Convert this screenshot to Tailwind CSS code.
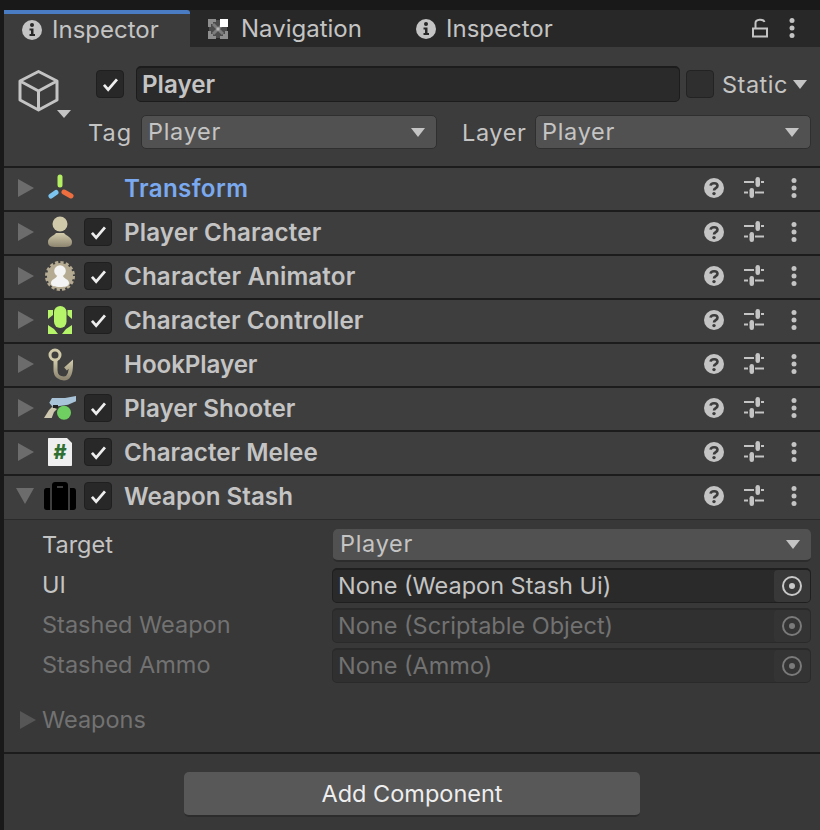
<!DOCTYPE html>
<html lang="en">
<head>
    <meta charset="UTF-8">
    <meta name="viewport" content="width=device-width, initial-scale=1.0">
    <title>Inspector</title>
    <script src="https://cdn.jsdelivr.net/npm/@tailwindcss/browser@4"></script>
</head>
<body class="bg-[#191919] font-['Inter',sans-serif] text-[#c4c4c4] text-[23.5px] leading-none">
    <!-- shared icons -->
    <svg width="0" height="0" class="absolute">
        <defs>
            <linearGradient id="tan" x1="0" y1="0" x2="0" y2="1">
                <stop offset="0" stop-color="#d2cbab"/>
                <stop offset="1" stop-color="#8d8570"/>
            </linearGradient>
        </defs>
        <symbol id="check" viewBox="0 0 28 28">
            <polyline points="7.5,15 12,20 21.5,9" fill="none" stroke="#eeeeee" stroke-width="3"/>
        </symbol>
        <symbol id="info" viewBox="0 0 20 20">
            <circle cx="10" cy="10" r="10" fill="#c4c4c4"/>
            <circle cx="10" cy="5" r="2" fill="#282828"/>
            <path d="M7.5 8.5H11.5V14H13V16H7.5V14H9V10.5H7.5Z" fill="#282828"/>
        </symbol>
        <symbol id="help" viewBox="0 0 20 20">
            <circle cx="10" cy="10" r="10" fill="#c4c4c4"/>
            <path d="M6.6 7.6C6.9 4.6 13.4 4.2 13.5 7.8C13.5 10.4 10 10 10 12.6" fill="none" stroke="#3c3c3c" stroke-width="2.6"/>
            <circle cx="10" cy="15.6" r="1.7" fill="#3c3c3c"/>
        </symbol>
        <symbol id="sliders" viewBox="0 0 20 22">
            <path d="M0 5H10M17 5H20M0 15.5H4M11 15.5H20" stroke="#c4c4c4" stroke-width="2"/>
            <rect x="11.5" y="0" width="4.5" height="10" rx="2.2" fill="#c4c4c4"/>
            <rect x="5.5" y="11" width="4.5" height="10" rx="2.2" fill="#c4c4c4"/>
        </symbol>
        <symbol id="dots" viewBox="0 0 6 22">
            <circle cx="3" cy="3.4" r="2.5" fill="#c4c4c4"/>
            <circle cx="3" cy="11" r="2.5" fill="#c4c4c4"/>
            <circle cx="3" cy="18.6" r="2.5" fill="#c4c4c4"/>
        </symbol>
        <symbol id="right" viewBox="0 0 16 18">
            <polygon points="0,0 16,9 0,18" fill="#6c6c6c"/>
        </symbol>
        <symbol id="target" viewBox="0 0 20 20">
            <circle cx="10" cy="10" r="9" fill="none" stroke="currentColor" stroke-width="2"/>
            <circle cx="10" cy="10" r="3" fill="currentColor"/>
        </symbol>
    </svg>

    <div class="w-[820px] h-[830px] overflow-hidden pt-[10px] pl-[4px] flex flex-col">
        <!-- tabs -->
        <div class="h-[37px] shrink-0 bg-[#282828] flex items-stretch text-[24px]">
            <div class="w-[186px] bg-[#3c3c3c] border-t-4 border-[#4a7cc4] rounded-tr-[3px] flex items-center pl-[18px] pb-[1px] gap-[10px]">
                <svg class="w-[20px] h-[20px]"><use href="#info"/></svg>
                <span>Inspector</span>
            </div>
            <div class="flex items-center pl-[18px] gap-[13px] w-[208px]">
                <svg class="w-[20px] h-[20px]" viewBox="0 0 20 20">
                    <rect x="1" y="1" width="18" height="18" fill="#4c4c4c"/>
                    <path d="M0 0H8V3H5V5H3V8H0ZM0 12H3V15H5V17H8V20H0ZM12 17H15V15H17V12H20V20H12Z" fill="#8e8e8e"/>
                    <path d="M5 5L15 15M15 5L5 15" stroke="#7c7c7c" stroke-width="3"/>
                    <rect x="8.500" y="8.500" width="3" height="3" fill="#b8b8b8"/>
                    <rect x="12" y="0" width="8" height="8" fill="#ffffff"/>
                </svg>
                <span>Navigation</span>
            </div>
            <div class="flex items-center pl-[18px] gap-[10px]">
                <svg class="w-[20px] h-[20px]"><use href="#info"/></svg>
                <span>Inspector</span>
            </div>
            <div class="ml-auto flex items-center pr-[25px] pb-[1px] gap-[21px]">
                <svg class="w-[16px] h-[20px]" viewBox="0 0 16 20">
                    <path d="M1 10.5H15V18.5H1ZM3.5 10V5C3.5 0.8 11.5 0.8 12.5 4" fill="none" stroke="#c4c4c4" stroke-width="2"/>
                </svg>
                <svg class="w-[6px] h-[22px]"><use href="#dots"/></svg>
            </div>
        </div>

        <!-- game object header -->
        <div class="h-[121px] shrink-0 bg-[#3c3c3c] border-b-2 border-[#1c1c1c] flex">
            <div class="w-[84px] pl-[14px] pt-[23px]">
                <svg class="w-[54px] h-[50px]" viewBox="0 0 54 50">
                    <path d="M20.5 1.5L39 11V30L20.5 40L2 30V11ZM2 11L20.5 21L39 11M20.5 21V40" fill="none" stroke="#c4c4c4" stroke-width="3" stroke-linejoin="round"/>
                    <polygon points="39,40 53,40 46,48" fill="#c4c4c4"/>
                </svg>
            </div>
            <div class="flex-1">
                <div class="h-[36px] mt-[19px] pl-[8px] flex items-center">
                    <div class="w-[28px] h-[28px] bg-[#282828] border border-[#1f1f1f] rounded-[4px]">
                        <svg class="w-full h-full"><use href="#check"/></svg>
                    </div>
                    <div class="w-[544px] h-[36px] ml-[12px] bg-[#2a2a2a] border border-[#1c1c1c] border-t-2 rounded-[5px] flex items-center pl-[5px] font-semibold text-[24.2px]"><span class="mt-[2px]">Player</span></div>
                    <div class="w-[28px] h-[28px] ml-[6px] bg-[#2f2f2f] border border-[#232323] rounded-[4px]"></div>
                    <span class="ml-[8px] mt-[2px] tracking-[0.5px]">Static</span>
                    <svg class="w-[14px] h-[9px] ml-[5px]" viewBox="0 0 14 9"><polygon points="0,0 14,0 7,9" fill="#c4c4c4"/></svg>
                </div>
                <div class="h-[34px] mt-[13px] flex items-center">
                    <span class="w-[53px] mt-[2px] tracking-[1px]">Tag</span>
                    <div class="w-[296px] h-[34px] bg-[#515151] border border-[#2f2f2f] rounded-[5px] flex items-center justify-between pl-[6px] pr-[11px]">
                        <span class="tracking-[0.7px]">Player</span>
                        <svg class="w-[14px] h-[9px]" viewBox="0 0 14 9"><polygon points="0,0 14,0 7,9" fill="#c4c4c4"/></svg>
                    </div>
                    <span class="w-[73px] ml-[25px] mt-[2px] tracking-[0.6px]">Layer</span>
                    <div class="w-[276px] h-[34px] bg-[#515151] border border-[#2f2f2f] rounded-[5px] flex items-center justify-between pl-[6px] pr-[11px]">
                        <span class="tracking-[0.7px]">Player</span>
                        <svg class="w-[14px] h-[9px]" viewBox="0 0 14 9"><polygon points="0,0 14,0 7,9" fill="#c4c4c4"/></svg>
                    </div>
                </div>
            </div>
        </div>

        <!-- components -->
        <div class="h-[44px] shrink-0 bg-[#3e3e3e] border-b-2 border-[#1c1c1c] pb-[2px] pl-[14px] flex items-center">
            <svg class="w-[16px] h-[18px]"><use href="#right"/></svg>
            <svg class="w-[40px] h-[40px] ml-[6px]" viewBox="0 0 40 40">
                <path d="M20 9V17" stroke="#b4ee62" stroke-width="5" stroke-linecap="round"/>
                <path d="M11 28L16 24.5" stroke="#7cc4f0" stroke-width="5" stroke-linecap="round"/>
                <path d="M24 24L31 28" stroke="#ee6e40" stroke-width="5" stroke-linecap="round"/>
            </svg>
            <span class="ml-[44px] mt-[2px] font-semibold text-[24.2px] tracking-[0.35px] text-[#7ba9ef]">Transform</span>
            <svg class="w-[20px] h-[20px] ml-auto"><use href="#help"/></svg>
            <svg class="w-[20px] h-[22px] ml-[20px]"><use href="#sliders"/></svg>
            <svg class="w-[6px] h-[22px] ml-[27px] mr-[23px]"><use href="#dots"/></svg>
        </div>

        <div class="h-[44px] shrink-0 bg-[#3e3e3e] border-b-2 border-[#1c1c1c] pb-[2px] pl-[14px] flex items-center">
            <svg class="w-[16px] h-[18px]"><use href="#right"/></svg>
            <svg class="w-[40px] h-[40px] ml-[6px]" viewBox="0 0 40 40">
                <circle cx="20" cy="12" r="7.5" fill="#cfc8a9"/>
                <path d="M8 30C8 25 14 24 16 21H24C26 24 32 25 32 30C32 35 28 35 20 35C12 35 8 35 8 30Z" fill="url(#tan)"/>
            </svg>
            <div class="w-[28px] h-[28px] ml-[4px] bg-[#282828] border border-[#1f1f1f] rounded-[4px]"><svg class="w-full h-full"><use href="#check"/></svg></div>
            <span class="ml-[12px] mt-[2px] font-semibold text-[24.2px] tracking-[0.13px]">Player Character</span>
            <svg class="w-[20px] h-[20px] ml-auto"><use href="#help"/></svg>
            <svg class="w-[20px] h-[22px] ml-[20px]"><use href="#sliders"/></svg>
            <svg class="w-[6px] h-[22px] ml-[27px] mr-[23px]"><use href="#dots"/></svg>
        </div>

        <div class="h-[44px] shrink-0 bg-[#3e3e3e] border-b-2 border-[#1c1c1c] pb-[2px] pl-[14px] flex items-center">
            <svg class="w-[16px] h-[18px]"><use href="#right"/></svg>
            <svg class="w-[40px] h-[40px] ml-[6px]" viewBox="0 0 40 40">
                <circle cx="20" cy="20" r="13" fill="#b5ab92"/>
                <circle cx="20" cy="20" r="13.5" fill="none" stroke="#b5ab92" stroke-width="3" stroke-dasharray="3.200 2.100"/>
                <circle cx="20" cy="15" r="5.8" fill="#f4f4f4"/>
                <path d="M11 27C11 23 16 23 17 20H23C24 23 29 23 29 27C29 30.500 25 31 20 31C15 31 11 30.500 11 27Z" fill="#f4f4f4"/>
            </svg>
            <div class="w-[28px] h-[28px] ml-[4px] bg-[#282828] border border-[#1f1f1f] rounded-[4px]"><svg class="w-full h-full"><use href="#check"/></svg></div>
            <span class="ml-[12px] mt-[2px] font-semibold text-[24.2px] tracking-[0.12px]">Character Animator</span>
            <svg class="w-[20px] h-[20px] ml-auto"><use href="#help"/></svg>
            <svg class="w-[20px] h-[22px] ml-[20px]"><use href="#sliders"/></svg>
            <svg class="w-[6px] h-[22px] ml-[27px] mr-[23px]"><use href="#dots"/></svg>
        </div>

        <div class="h-[44px] shrink-0 bg-[#3e3e3e] border-b-2 border-[#1c1c1c] pb-[2px] pl-[14px] flex items-center">
            <svg class="w-[16px] h-[18px]"><use href="#right"/></svg>
            <svg class="w-[40px] h-[40px] ml-[6px]" viewBox="0 0 40 40">
                <rect x="14" y="6" width="12.5" height="22" rx="6.2" fill="#b6f46a"/>
                <polygon points="8,10 13,10 13,15 8,19" fill="#b6f46a"/>
                <polygon points="27.5,10 32,10 32,19 27.5,15" fill="#b6f46a"/>
                <polygon points="8,25 14,29 18,34 8,34" fill="#b6f46a"/>
                <polygon points="32,25 26,29 22,34 32,34" fill="#b6f46a"/>
            </svg>
            <div class="w-[28px] h-[28px] ml-[4px] bg-[#282828] border border-[#1f1f1f] rounded-[4px]"><svg class="w-full h-full"><use href="#check"/></svg></div>
            <span class="ml-[12px] mt-[2px] font-semibold text-[24.2px] tracking-[0.05px]">Character Controller</span>
            <svg class="w-[20px] h-[20px] ml-auto"><use href="#help"/></svg>
            <svg class="w-[20px] h-[22px] ml-[20px]"><use href="#sliders"/></svg>
            <svg class="w-[6px] h-[22px] ml-[27px] mr-[23px]"><use href="#dots"/></svg>
        </div>

        <div class="h-[44px] shrink-0 bg-[#3e3e3e] border-b-2 border-[#1c1c1c] pb-[2px] pl-[14px] flex items-center">
            <svg class="w-[16px] h-[18px]"><use href="#right"/></svg>
            <svg class="w-[40px] h-[40px] ml-[6px]" viewBox="0 0 40 40">
                <circle cx="15" cy="11" r="5" fill="none" stroke="#cfc8a9" stroke-width="3"/>
                <path d="M15.5 16V26C15.500 32 20 34.500 24 34.500C29 34.500 31 30 31 20L25.500 25" fill="none" stroke="url(#tan)" stroke-width="4"/>
            </svg>
            <span class="ml-[44px] mt-[2px] font-semibold text-[24.2px] tracking-[-0.1px]">HookPlayer</span>
            <svg class="w-[20px] h-[20px] ml-auto"><use href="#help"/></svg>
            <svg class="w-[20px] h-[22px] ml-[20px]"><use href="#sliders"/></svg>
            <svg class="w-[6px] h-[22px] ml-[27px] mr-[23px]"><use href="#dots"/></svg>
        </div>

        <div class="h-[44px] shrink-0 bg-[#3e3e3e] border-b-2 border-[#1c1c1c] pb-[2px] pl-[14px] flex items-center">
            <svg class="w-[16px] h-[18px]"><use href="#right"/></svg>
            <svg class="w-[40px] h-[40px] ml-[6px]" viewBox="0 0 40 40">
                <polygon points="12,19 17,21 14,24 11.700,30 4,30 9,22" fill="#cfc8b0"/>
                <polygon points="12,10 25,10 36,8 36,13.300 28,16.700 12.700,19 9.300,14.700" fill="#a9c4d8"/>
                <rect x="13" y="17" width="5" height="3" fill="#222222"/>
                <circle cx="24" cy="24.700" r="7" fill="#6fcf60"/>
            </svg>
            <div class="w-[28px] h-[28px] ml-[4px] bg-[#282828] border border-[#1f1f1f] rounded-[4px]"><svg class="w-full h-full"><use href="#check"/></svg></div>
            <span class="ml-[12px] mt-[2px] font-semibold text-[24.2px]">Player Shooter</span>
            <svg class="w-[20px] h-[20px] ml-auto"><use href="#help"/></svg>
            <svg class="w-[20px] h-[22px] ml-[20px]"><use href="#sliders"/></svg>
            <svg class="w-[6px] h-[22px] ml-[27px] mr-[23px]"><use href="#dots"/></svg>
        </div>

        <div class="h-[44px] shrink-0 bg-[#3e3e3e] border-b-2 border-[#1c1c1c] pb-[2px] pl-[14px] flex items-center">
            <svg class="w-[16px] h-[18px]"><use href="#right"/></svg>
            <svg class="w-[40px] h-[40px] ml-[6px]" viewBox="0 0 40 40">
                <path d="M9 6H27L32 11V33C32 33.6 31.6 34 31 34H9C8.400 34 8 33.600 8 33V7C8 6.400 8.400 6 9 6Z" fill="#efefef"/>
                <text x="20" y="27" text-anchor="middle" font-size="20" font-weight="800" fill="#2f6f32">#</text>
            </svg>
            <div class="w-[28px] h-[28px] ml-[4px] bg-[#282828] border border-[#1f1f1f] rounded-[4px]"><svg class="w-full h-full"><use href="#check"/></svg></div>
            <span class="ml-[12px] mt-[2px] font-semibold text-[24.2px]">Character Melee</span>
            <svg class="w-[20px] h-[20px] ml-auto"><use href="#help"/></svg>
            <svg class="w-[20px] h-[22px] ml-[20px]"><use href="#sliders"/></svg>
            <svg class="w-[6px] h-[22px] ml-[27px] mr-[23px]"><use href="#dots"/></svg>
        </div>

        <div class="h-[44px] shrink-0 bg-[#3e3e3e] border-b border-[#2a2a2a] pb-[3px] pl-[12px] flex items-center">
            <svg class="w-[18px] h-[16px]" viewBox="0 0 18 16"><polygon points="0,0 18,0 9,16" fill="#6c6c6c"/></svg>
            <svg class="w-[40px] h-[40px] ml-[6px]" viewBox="0 0 40 40">
                <path d="M4 15C4 13 5 12 6.500 12H10V34H6.500C5 34 4 33 4 31.500ZM30 12H33.500C35 12 36 13 36 15V31.500C36 33 35 34 33.500 34H30Z" fill="#000000"/>
                <path d="M12 9C12 7 13.500 6 15 6H25C26.500 6 28 7 28 9V34H12Z" fill="#000000"/>
                <path d="M17 11H23" stroke="#555555" stroke-width="1.500"/>
            </svg>
            <div class="w-[28px] h-[28px] ml-[4px] bg-[#282828] border border-[#1f1f1f] rounded-[4px]"><svg class="w-full h-full"><use href="#check"/></svg></div>
            <span class="ml-[12px] mt-[2px] font-semibold text-[24.2px]">Weapon Stash</span>
            <svg class="w-[20px] h-[20px] ml-auto"><use href="#help"/></svg>
            <svg class="w-[20px] h-[22px] ml-[20px]"><use href="#sliders"/></svg>
            <svg class="w-[6px] h-[22px] ml-[27px] mr-[23px]"><use href="#dots"/></svg>
        </div>

        <!-- weapon stash fields -->
        <div class="flex-1 bg-[#383838] flex flex-col">
            <div class="h-[234px] shrink-0 border-b-2 border-[#1c1c1c] pl-[38px] pr-[9px] pt-[8px]">
                <div class="h-[34px] flex items-center">
                    <span class="w-[291px]">Target</span>
                    <div class="flex-1 h-[33px] bg-[#515151] border-b-2 border-[#2c2c2c] rounded-[5px] flex items-center justify-between pl-[7px] pr-[11px]">
                        <span class="tracking-[0.7px]">Player</span>
                        <svg class="w-[14px] h-[9px]" viewBox="0 0 14 9"><polygon points="0,0 14,0 7,9" fill="#c4c4c4"/></svg>
                    </div>
                </div>
                <div class="h-[34px] mt-[6px] flex items-center">
                    <span class="w-[290px]">UI</span>
                    <div class="flex-1 h-[35px] bg-[#2a2a2a] border border-[#1f1f1f] border-t-2 rounded-[5px] flex items-center justify-between pl-[5px]">
                        <span>None (Weapon Stash Ui)</span>
                        <div class="w-[36px] h-full bg-[#383838] rounded-[4px] flex items-center justify-center text-[#c8c8c8]">
                            <svg class="w-[20px] h-[20px]"><use href="#target"/></svg>
                        </div>
                    </div>
                </div>
                <div class="h-[34px] mt-[6px] flex items-center text-[#727272]">
                    <span class="w-[290px]">Stashed Weapon</span>
                    <div class="flex-1 h-[35px] bg-[#303030] border border-[#2a2a2a] border-t-2 rounded-[5px] flex items-center justify-between pl-[5px]">
                        <span>None (Scriptable Object)</span>
                        <div class="w-[36px] h-full bg-[#343434] rounded-[4px] flex items-center justify-center text-[#7a7a7a]">
                            <svg class="w-[20px] h-[20px]"><use href="#target"/></svg>
                        </div>
                    </div>
                </div>
                <div class="h-[34px] mt-[6px] flex items-center text-[#727272]">
                    <span class="w-[290px]">Stashed Ammo</span>
                    <div class="flex-1 h-[35px] bg-[#303030] border border-[#2a2a2a] border-t-2 rounded-[5px] flex items-center justify-between pl-[5px]">
                        <span>None (Ammo)</span>
                        <div class="w-[36px] h-full bg-[#343434] rounded-[4px] flex items-center justify-center text-[#7a7a7a]">
                            <svg class="w-[20px] h-[20px]"><use href="#target"/></svg>
                        </div>
                    </div>
                </div>
                <div class="mt-[26px] -ml-[22px] flex items-center text-[#727272]">
                    <svg class="w-[16px] h-[18px]" viewBox="0 0 16 18"><polygon points="0,0 16,9 0,18" fill="#565656"/></svg>
                    <span class="ml-[6px]">Weapons</span>
                </div>
            </div>
            <div class="flex justify-center pt-[18px]">
                <div class="w-[456px] h-[45px] bg-[#585858] border-b-2 border-[#2c2c2c] rounded-[5px] flex items-center justify-center text-[#eeeeee]">Add Component</div>
            </div>
        </div>
    </div>
</body>
</html>
